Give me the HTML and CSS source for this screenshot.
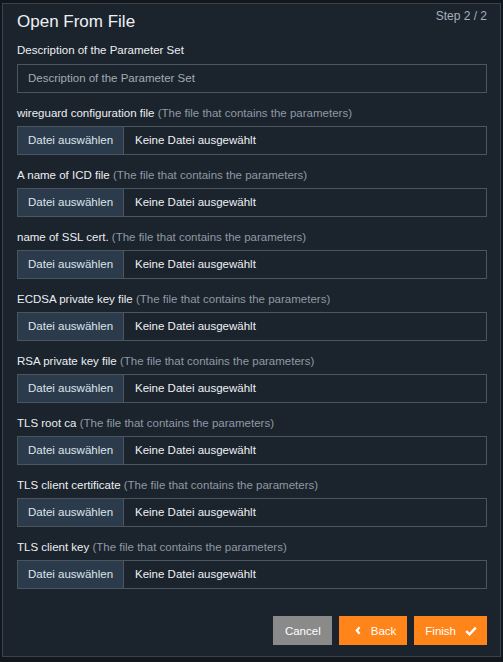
FILE: index.html
```html
<!DOCTYPE html>
<html>
<head>
<meta charset="utf-8">
<link rel="stylesheet" href="styles.css">
</head>
<body>
<div class="modal">
  <div class="header">
    <h1 class="title">Open From File</h1>
    <span class="step">Step 2 / 2</span>
  </div>
  <div class="group">
    <div class="label">Description of the Parameter Set</div>
    <div class="input">Description of the Parameter Set</div>
  </div>
  <div class="group">
    <div class="label">wireguard configuration file <span class="hint">(The file that contains the parameters)</span></div>
    <div class="file"><span class="file-btn">Datei auswählen</span><span class="file-name">Keine Datei ausgewählt</span></div>
  </div>
  <div class="group">
    <div class="label">A name of ICD file <span class="hint">(The file that contains the parameters)</span></div>
    <div class="file"><span class="file-btn">Datei auswählen</span><span class="file-name">Keine Datei ausgewählt</span></div>
  </div>
  <div class="group">
    <div class="label">name of SSL cert. <span class="hint">(The file that contains the parameters)</span></div>
    <div class="file"><span class="file-btn">Datei auswählen</span><span class="file-name">Keine Datei ausgewählt</span></div>
  </div>
  <div class="group">
    <div class="label">ECDSA private key file <span class="hint">(The file that contains the parameters)</span></div>
    <div class="file"><span class="file-btn">Datei auswählen</span><span class="file-name">Keine Datei ausgewählt</span></div>
  </div>
  <div class="group">
    <div class="label">RSA private key file <span class="hint">(The file that contains the parameters)</span></div>
    <div class="file"><span class="file-btn">Datei auswählen</span><span class="file-name">Keine Datei ausgewählt</span></div>
  </div>
  <div class="group">
    <div class="label">TLS root ca <span class="hint">(The file that contains the parameters)</span></div>
    <div class="file"><span class="file-btn">Datei auswählen</span><span class="file-name">Keine Datei ausgewählt</span></div>
  </div>
  <div class="group">
    <div class="label">TLS client certificate <span class="hint">(The file that contains the parameters)</span></div>
    <div class="file"><span class="file-btn">Datei auswählen</span><span class="file-name">Keine Datei ausgewählt</span></div>
  </div>
  <div class="group">
    <div class="label">TLS client key <span class="hint">(The file that contains the parameters)</span></div>
    <div class="file"><span class="file-btn">Datei auswählen</span><span class="file-name">Keine Datei ausgewählt</span></div>
  </div>
  <div class="footer">
    <button class="btn btn-cancel">Cancel</button>
    <button class="btn btn-orange btn-back"><svg class="ico-back" width="6" height="9" viewBox="0 0 6 9"><path d="M4.6 1.2 L1.8 4.5 L4.6 7.8" fill="none" stroke="#fff" stroke-width="2.2"/></svg>Back</button>
    <button class="btn btn-orange btn-finish">Finish<svg class="ico-check" width="12" height="10" viewBox="0 0 12 10"><path d="M1.2 5.2 L4.5 8.3 L10.8 1.6" fill="none" stroke="#fff" stroke-width="2.4"/></svg></button>
  </div>
</div>
</body>
</html>
```
FILE: styles.css
```css
html, body {
  margin: 0;
  padding: 0;
}
body {
  background: #12171d;
  font-family: "Liberation Sans", Arial, sans-serif;
  font-size: 11.5px;
  color: #e8ebee;
  width: 503px;
  height: 662px;
  overflow: hidden;
}
.modal {
  margin: 3px 2px 0 2px;
  height: 654px;
  box-sizing: border-box;
  border: 1px solid #3a434c;
  background: #1b232d;
  padding: 7px 13px 0 14px;
  display: flex;
  flex-direction: column;
}
.header {
  display: flex;
  justify-content: space-between;
  align-items: flex-start;
  height: 21px;
  margin-bottom: 11px;
}
.title {
  margin: 1px 0 0 0;
  font-size: 17px;
  font-weight: normal;
  line-height: 20px;
  color: #eef1f4;
}
.step {
  font-size: 12px;
  line-height: 14px;
  color: #a6b0ba;
  margin-top: -2px;
}
.group {
  margin-bottom: 13px;
}
.label {
  line-height: 14px;
  margin-bottom: 7px;
  color: #eceff2;
}
.group + .group .label {
  margin-bottom: 6px;
}
.hint {
  color: #8f99a4;
}
.input {
  height: 29px;
  box-sizing: border-box;
  border: 1px solid #4b5560;
  padding: 0 10px;
  line-height: 27px;
  color: #a3abb4;
}
.file {
  height: 29px;
  box-sizing: border-box;
  border: 1px solid #4b5560;
  display: flex;
  line-height: 27px;
}
.file-btn {
  width: 106px;
  box-sizing: border-box;
  background: #2b3b4c;
  border-right: 1px solid #4b5560;
  padding-left: 10px;
  color: #dfe4e9;
}
.file-name {
  padding-left: 11px;
  color: #eef1f4;
}
.footer {
  margin-top: 14px;
  display: flex;
  justify-content: flex-end;
  gap: 7px;
}
.btn {
  height: 29px;
  border: none;
  font-family: "Liberation Sans", Arial, sans-serif;
  font-size: 11.5px;
  color: #ffffff;
  display: flex;
  align-items: center;
  padding: 0;
  cursor: pointer;
}
.btn-cancel {
  background: #8a8a8a;
  padding: 0 11px 0 12px;
}
.btn-orange {
  background: #ff8419;
}
.btn-back {
  padding: 0 11px 0 16px;
}
.ico-back {
  margin-right: 10px;
}
.btn-finish {
  padding: 0 10px 0 11px;
}
.ico-check {
  margin-left: 9px;
}
```
